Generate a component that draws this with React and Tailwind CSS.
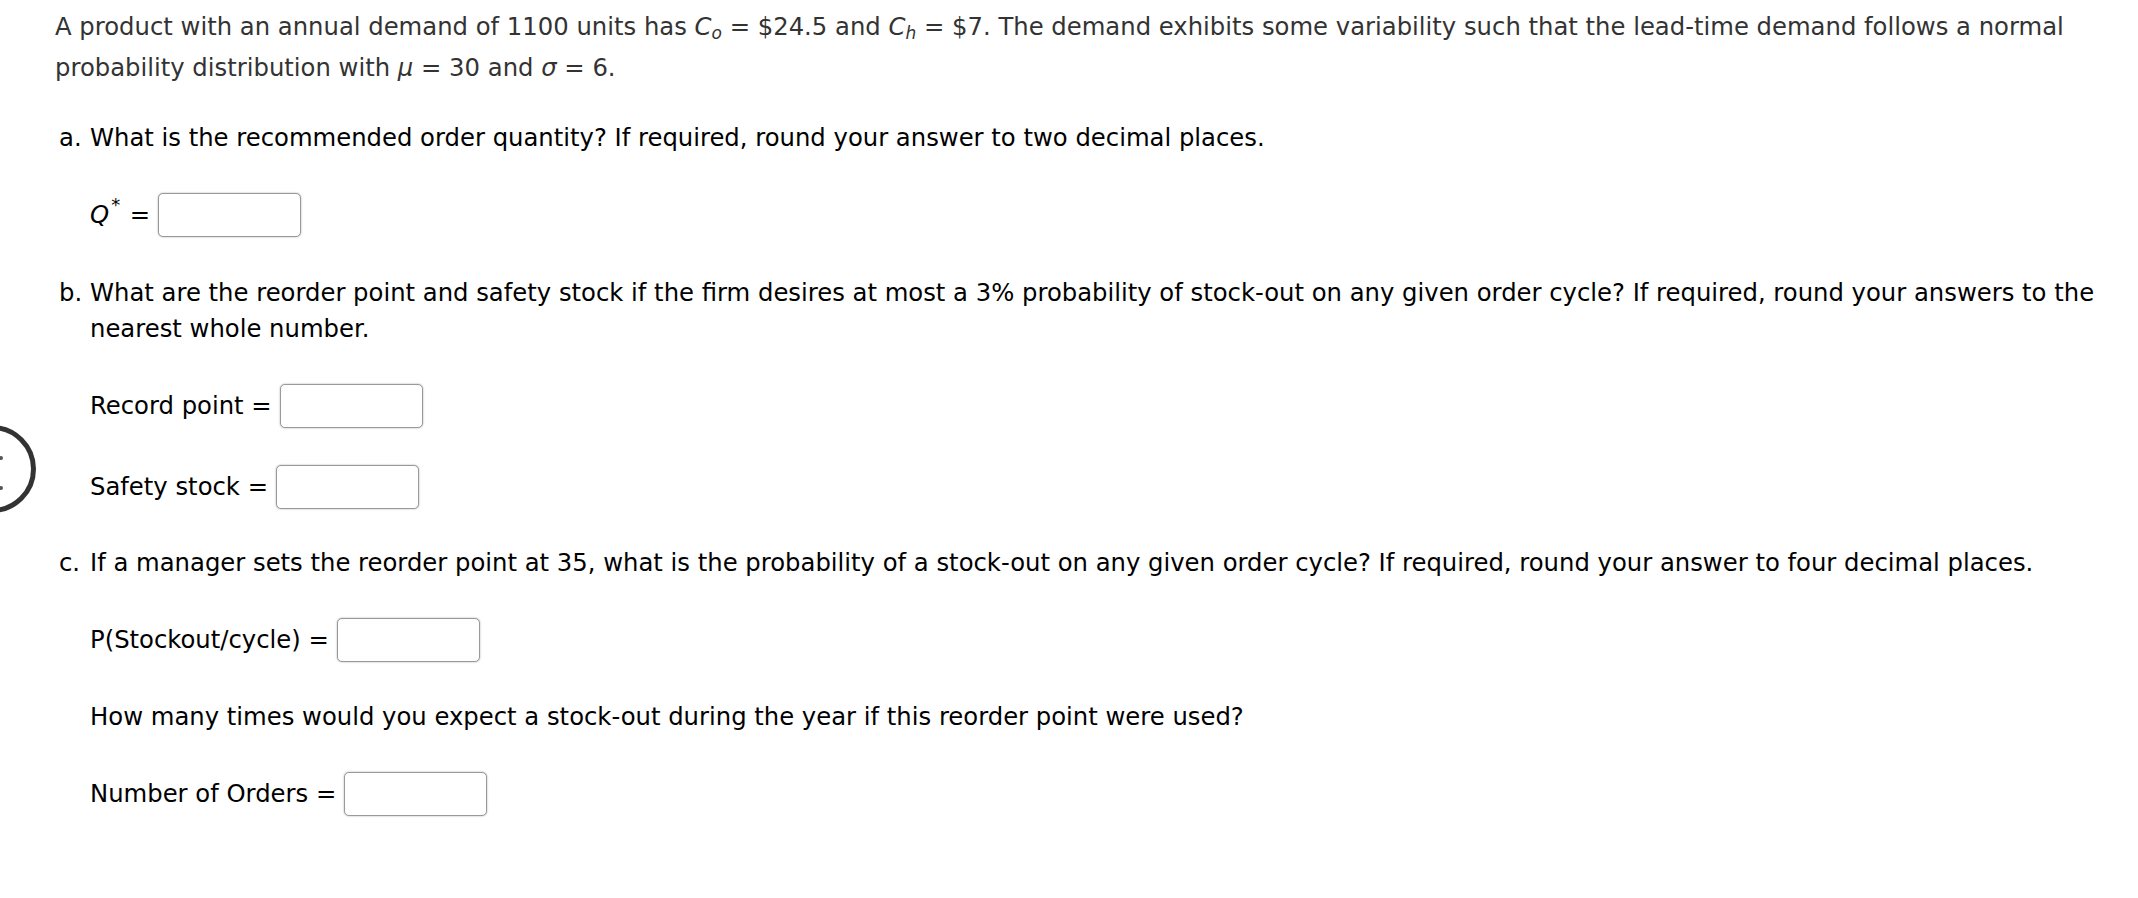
import React from 'react';

const font = { fontFamily: '"DejaVu Sans", Verdana, sans-serif' };

function AnswerBox() {
  return (
    <input
      type="text"
      className="w-[143px] h-[44px] border border-[#999] rounded-[5px] bg-white shadow-[0_0_2px_rgba(0,0,0,0.35)] outline-none"
    />
  );
}

function Row({ children }) {
  return (
    <div className="flex items-center mt-[37px] h-[44px]">
      <span className="whitespace-nowrap">{children}</span>
      <span className="ml-[8px]">
        <AnswerBox />
      </span>
    </div>
  );
}

function Question({ label, children }) {
  return (
    <div className="flex text-black">
      <span className="w-[31px] shrink-0">{label}</span>
      <div className="flex-1">{children}</div>
    </div>
  );
}

export default function App() {
  return (
    <div className="relative min-h-screen bg-white overflow-hidden" style={font}>
      {/* partial widget on the left edge */}
      <div className="absolute left-[-52px] top-[425px] w-[88px] h-[88px] rounded-full border-[5px] border-[#333]">
        <span className="absolute left-[46px] top-[26px] w-[4px] h-[4px] rounded-full bg-[#555]" />
        <span className="absolute left-[46px] top-[56px] w-[4px] h-[4px] rounded-full bg-[#555]" />
      </div>

      <div className="pl-[55px] pt-[6px] text-[24.3px]">
        {/* Problem statement */}
        <p className="leading-[41px] text-[#333] whitespace-nowrap">
          A product with an annual demand of 1100 units has <i>C</i>
          <sub className="italic text-[17px] leading-none">o</sub> = $24.5 and <i>C</i>
          <sub className="italic text-[17px] leading-none">h</sub> = $7. The demand exhibits some variability such that
          the lead-time demand follows a normal
          <br />
          probability distribution with <i>μ</i> = 30 and <i>σ</i> = 6.
        </p>

        <div className="pl-[4px] mt-[32px] leading-[36px]">
          <Question label="a.">
            <p className="whitespace-nowrap">
              What is the recommended order quantity? If required, round your answer to two decimal places.
            </p>
            <Row>
              <i>Q</i>
              <sup className="text-[18px] leading-none ml-[2px] top-[-12px]">*</sup>
              <span className="ml-[2px]"> =</span>
            </Row>
          </Question>

          <div className="mt-[38px]">
            <Question label="b.">
              <p className="whitespace-nowrap">
                What are the reorder point and safety stock if the firm desires at most a 3% probability of stock-out
                on any given order cycle? If required, round your answers to the
                <br />
                nearest whole number.
              </p>
              <Row>Record point =</Row>
              <Row>Safety stock =</Row>
            </Question>
          </div>

          <div className="mt-[36px]">
            <Question label="c.">
              <p className="whitespace-nowrap">
                If a manager sets the reorder point at 35, what is the probability of a stock-out on any given order
                cycle? If required, round your answer to four decimal places.
              </p>
              <Row>P(Stockout/cycle) =</Row>
              <p className="mt-[37px] whitespace-nowrap">
                How many times would you expect a stock-out during the year if this reorder point were used?
              </p>
              <Row>Number of Orders =</Row>
            </Question>
          </div>
        </div>
      </div>
    </div>
  );
}
